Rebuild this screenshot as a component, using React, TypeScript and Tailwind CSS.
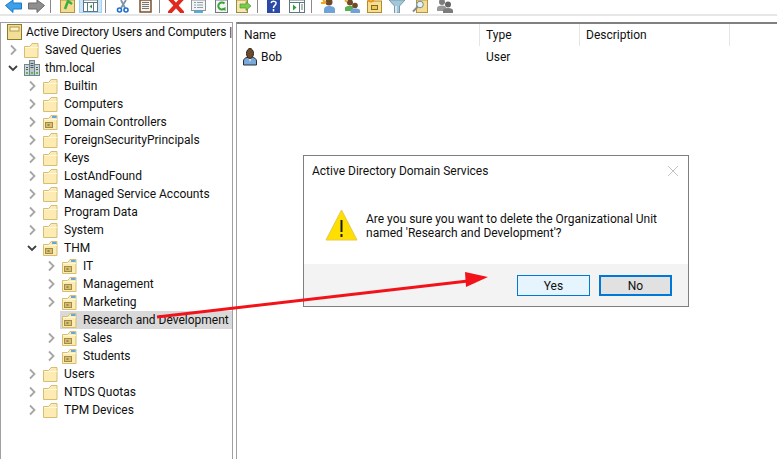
import React from 'react';

type Kind = 'folder' | 'ou' | 'domain';

interface Node {
  label: string;
  depth: number;
  kind: Kind;
  open?: boolean;
  leaf?: boolean;
  selected?: boolean;
}

const tree: Node[] = [
  { label: 'Saved Queries', depth: 0, kind: 'folder' },
  { label: 'thm.local', depth: 0, kind: 'domain', open: true },
  { label: 'Builtin', depth: 1, kind: 'folder' },
  { label: 'Computers', depth: 1, kind: 'folder' },
  { label: 'Domain Controllers', depth: 1, kind: 'ou' },
  { label: 'ForeignSecurityPrincipals', depth: 1, kind: 'folder' },
  { label: 'Keys', depth: 1, kind: 'folder' },
  { label: 'LostAndFound', depth: 1, kind: 'folder' },
  { label: 'Managed Service Accounts', depth: 1, kind: 'folder' },
  { label: 'Program Data', depth: 1, kind: 'folder' },
  { label: 'System', depth: 1, kind: 'folder' },
  { label: 'THM', depth: 1, kind: 'ou', open: true },
  { label: 'IT', depth: 2, kind: 'ou' },
  { label: 'Management', depth: 2, kind: 'ou' },
  { label: 'Marketing', depth: 2, kind: 'ou' },
  { label: 'Research and Development', depth: 2, kind: 'ou', leaf: true, selected: true },
  { label: 'Sales', depth: 2, kind: 'ou' },
  { label: 'Students', depth: 2, kind: 'ou' },
  { label: 'Users', depth: 1, kind: 'folder' },
  { label: 'NTDS Quotas', depth: 1, kind: 'folder' },
  { label: 'TPM Devices', depth: 1, kind: 'folder' },
];

const FolderIcon = ({ ou }: { ou?: boolean }) => (
  <svg width="15" height="15" viewBox="0 0 15 15" className="shrink-0">
    <path d="M0.500 14.500V3.500h5l1.500-1.500 1-1.500h6v14z" fill="#fcecb4" stroke="#d6bd72" />
    <path d="M1 4.500h13" stroke="#fff8dc" />
    {ou && <rect x="2.500" y="7.500" width="7" height="5" fill="#d8bf70" stroke="#a08c48" />}
    {ou && <rect x="4.500" y="9.500" width="2" height="1" fill="#5c5228" />}
    {ou && <rect x="9" y="1" width="4.500" height="2" fill="#62a8dc" />}
  </svg>
);

const DomainIcon = () => (
  <svg width="16" height="16" viewBox="0 0 16 16" className="shrink-0">
    <rect x="5.500" y="0.500" width="5" height="15" fill="#b9c6cc" stroke="#76858c" />
    <rect x="0.500" y="4.500" width="5" height="11" fill="#cdd7db" stroke="#76858c" />
    <rect x="10.500" y="4.500" width="5" height="11" fill="#cdd7db" stroke="#76858c" />
    <rect x="2" y="12" width="2" height="2" fill="#58c04a" />
    <rect x="7" y="12" width="2" height="2" fill="#58c04a" />
    <rect x="12" y="12" width="2" height="2" fill="#58c04a" />
    <path d="M6.500 3.500h3M6.500 5.500h3M6.500 7.500h3M2 7.500h2M12 7.500h2M2 9.500h2M12 9.500h2" stroke="#4d5b61" />
  </svg>
);

const UserIcon = () => (
  <svg width="14" height="18" viewBox="0 0 14 18" className="shrink-0">
    <path d="M0.500 17v-4c0-2 2-3.500 3.500-3.500h5.500c2 0 4 1.500 4 3.500v4z" fill="#7aa8d8" stroke="#26303c" />
    <path d="M5.500 10h3l-1.500 4z" fill="#e6eef6" />
    <ellipse cx="7" cy="5.500" rx="3.500" ry="5" fill="#6b4a2f" stroke="#2e2218" />
  </svg>
);

const Chevron = ({ open }: { open?: boolean }) =>
  open ? (
    <svg width="10" height="10" viewBox="0 0 10 10" className="shrink-0">
      <path d="M1 3l4 4 4-4" fill="none" stroke="#404040" strokeWidth="1.800" />
    </svg>
  ) : (
    <svg width="10" height="12" viewBox="0 0 10 12" className="shrink-0">
      <path d="M3 1.500L7.500 6 3 10.500" fill="none" stroke="#a6a6a6" strokeWidth="1.800" />
    </svg>
  );

const Sep = () => <div className="w-px h-[13px] bg-[#8a8a8a] shrink-0" />;

// toolbar icons, cropped by the top of the window
const Toolbar = () => (
  <div className="h-[13px] bg-white flex items-end overflow-hidden pl-[5px]">
    <svg width="17" height="13" viewBox="0 0 17 13" className="shrink-0">
      <path d="M0.500 5.500L8 0v3h8.500v6H8v3.500z" fill="#3fa0ea" stroke="#1d78c4" />
    </svg>
    <svg width="17" height="13" viewBox="0 0 17 13" className="shrink-0 ml-[6px]">
      <path d="M16.500 5.500L9 0v3H0.500v6H9v3.500z" fill="#8f8f8f" stroke="#6a6a6a" />
    </svg>
    <div className="ml-[5px]"><Sep /></div>
    <svg width="15" height="13" viewBox="0 0 15 13" className="shrink-0 ml-[9px]">
      <rect x="0.500" y="0" width="14" height="12.500" fill="#f3dc92" stroke="#b4953f" />
      <path d="M5 9l3-8 4 3" stroke="#3fae3c" strokeWidth="2.500" fill="none" />
    </svg>
    <div className="ml-[4px] w-[23px] h-[13px] bg-[#cfe6f8] border border-t-0 border-[#99d1ff] flex items-end justify-center shrink-0">
      <svg width="15" height="12" viewBox="0 0 15 12">
        <rect x="0.500" y="0" width="14" height="11.500" fill="#ffffff" stroke="#5d7a80" />
        <path d="M0.500 2.500h14M4.500 2.500v9M10.500 2.500v9" stroke="#5d7a80" />
        <path d="M9 4.500v4l-2.500-2z" fill="#2e9e3a" />
      </svg>
    </div>
    <div className="ml-[3px]"><Sep /></div>
    <svg width="13" height="13" viewBox="0 0 13 13" className="shrink-0 ml-[10px]">
      <path d="M5 0l4 8M10 0L5 8" stroke="#7f93a6" strokeWidth="1.800" />
      <circle cx="3.500" cy="10" r="2" fill="none" stroke="#1f6fd0" strokeWidth="1.600" />
      <circle cx="10" cy="10" r="2" fill="none" stroke="#1f6fd0" strokeWidth="1.600" />
    </svg>
    <svg width="13" height="13" viewBox="0 0 13 13" className="shrink-0 ml-[10px]">
      <rect x="1" y="0" width="11" height="12" fill="#f6f4ec" stroke="#7b5230" strokeWidth="1.500" />
      <path d="M3 2.500h7M3 4.500h7M3 6.500h7M3 8.500h7" stroke="#777777" />
    </svg>
    <div className="ml-[7px]"><Sep /></div>
    <svg width="16" height="13" viewBox="0 0 16 13" className="shrink-0 ml-[8px]">
      <path d="M2 -1l12 13M14 -1L2 12" stroke="#e0281f" strokeWidth="4" strokeLinecap="round" />
    </svg>
    <svg width="15" height="13" viewBox="0 0 15 13" className="shrink-0 ml-[7px]">
      <rect x="0.500" y="0" width="14" height="10.500" fill="#f4f4f4" stroke="#8b9498" />
      <path d="M3 2.500h2M6 2.500h6M3 5h2M6 5h6M3 7.500h2M6 7.500h6" stroke="#8ba0aa" />
      <rect x="3" y="11" width="9" height="2" fill="#45b0ea" />
    </svg>
    <svg width="13" height="13" viewBox="0 0 13 13" className="shrink-0 ml-[9px]">
      <rect x="0.500" y="0" width="12" height="12.500" fill="#f4f4f4" stroke="#6f787c" />
      <path d="M9.500 8.500a3.600 3.600 0 1 1 0-5" stroke="#37a637" strokeWidth="2" fill="none" />
      <path d="M7 9l3.500-2v4z" fill="#37a637" />
    </svg>
    <svg width="16" height="13" viewBox="0 0 16 13" className="shrink-0 ml-[8px]">
      <rect x="0.500" y="0" width="11" height="12.500" fill="#f6e7b0" stroke="#a08a3f" />
      <path d="M4 4h6V1.500L15 6l-5 4.500V8H4z" fill="#7ccb4a" stroke="#3f8f2c" strokeWidth="0.600" />
    </svg>
    <div className="ml-[5px]"><Sep /></div>
    <svg width="13" height="13" viewBox="0 0 13 13" className="shrink-0 ml-[9px]">
      <rect width="13" height="13" fill="#2b4aa8" />
      <path d="M4 3c1-2.500 5.500-2 5 .5C8.700 5.500 6.500 5.500 6.500 8M6.500 9v2.500" stroke="#ffffff" strokeWidth="1.500" fill="none" />
    </svg>
    <svg width="16" height="13" viewBox="0 0 16 13" className="shrink-0 ml-[9px]">
      <rect x="0.500" y="0" width="15" height="12.500" fill="#ffffff" stroke="#5d7a80" />
      <path d="M0.500 2.500h15M10.500 2.500v10" stroke="#5d7a80" />
      <path d="M4 4.500v6l3.500-3z" fill="#2e9e3a" />
      <path d="M12 5h2M12 7h2M12 9h2" stroke="#5d7a80" />
    </svg>
    <div className="ml-[6px]"><Sep /></div>
    <svg width="15" height="13" viewBox="0 0 15 13" className="shrink-0 ml-[9px]">
      <circle cx="8" cy="2" r="3.500" fill="#6f4a2a" />
      <path d="M3 13V9.500C3 7 5 6 8 6s6 1 6 3.500V13z" fill="#6fa2d6" />
      <path d="M2 0l3 3M0 3h4" stroke="#f2a51a" strokeWidth="1.800" />
    </svg>
    <svg width="16" height="13" viewBox="0 0 16 13" className="shrink-0 ml-[8px]">
      <circle cx="6" cy="2.500" r="3" fill="#6f4a2a" />
      <path d="M1 11V8c0-1.500 2-2 5-2s3 .5 3 2v3z" fill="#5db04e" />
      <circle cx="11" cy="5.500" r="2.800" fill="#6f4a2a" />
      <path d="M6.500 13v-2.500C6.500 9 8.500 8.500 11 8.500s5 .5 5 2V13z" fill="#6fa2d6" />
      <path d="M1 0l2 2" stroke="#f2a51a" strokeWidth="1.800" />
    </svg>
    <svg width="15" height="13" viewBox="0 0 15 13" className="shrink-0 ml-[7px]">
      <rect x="0.500" y="1" width="14" height="11.500" fill="#f8df90" stroke="#b58a2a" />
      <rect x="4.500" y="5.500" width="6" height="4" fill="#f2c84c" stroke="#7d6a2c" />
      <path d="M1 0l3 2M7 0L4 2" stroke="#f2921a" strokeWidth="1.800" />
    </svg>
    <svg width="16" height="13" viewBox="0 0 16 13" className="shrink-0 ml-[7px]">
      <path d="M0 0h16l-5.500 6v7h-5V6z" fill="#a3c6da" stroke="#7a99ab" />
      <path d="M7 6v7" stroke="#e6f0f6" strokeWidth="1.500" />
    </svg>
    <svg width="16" height="13" viewBox="0 0 16 13" className="shrink-0 ml-[7px]">
      <rect x="4.500" y="0" width="11" height="12.500" fill="#f4dd93" stroke="#b4953f" />
      <circle cx="8" cy="4.500" r="3.300" fill="#e8f2f8" stroke="#6d8ba0" />
      <path d="M5.500 7L1 11.500" stroke="#8a8a8a" strokeWidth="2" />
    </svg>
    <svg width="16" height="13" viewBox="0 0 16 13" className="shrink-0 ml-[9px]">
      <circle cx="5" cy="2" r="3" fill="#7e7e7e" />
      <circle cx="11" cy="4.500" r="3" fill="#666666" />
      <path d="M0 11V8c0-1.500 2-2.500 5-2.500S9 6.500 9 8v3z" fill="#999999" />
      <path d="M6 13v-2.500C6 9 8 8 11 8s5 1 5 2.500V13z" fill="#7c7c7c" />
    </svg>
  </div>
);

const TreeRow = ({ node }: { node: Node }) => (
  <div className="h-[18px] flex items-center">
    <div className={node.depth === 0 ? 'w-[7px] shrink-0' : node.depth === 1 ? 'w-[26px] shrink-0' : 'w-[45px] shrink-0'} />
    <div className={`w-[16px] shrink-0 flex items-center ${node.selected ? '-mr-[2px]' : ''}`}>
      {!node.leaf && <Chevron open={node.open} />}
    </div>
    <div className={`flex flex-1 items-center h-[18px] ${node.selected ? 'bg-[#d9d9d9] pl-[2px]' : ''}`}>
      {node.kind === 'domain' ? <DomainIcon /> : <FolderIcon ou={node.kind === 'ou'} />}
      <span className={`whitespace-nowrap ${node.kind === 'domain' ? 'ml-[5px]' : 'ml-[6px]'}`}>{node.label}</span>
    </div>
  </div>
);

export default function App() {
  return (
    <div
      className="relative w-[777px] h-[459px] overflow-hidden bg-white text-[12px] leading-[18px] text-[#101010]"
      style={{ fontFamily: 'Roboto, sans-serif' }}
    >
      <Toolbar />
      <div className="h-[8px] mt-[1px] bg-white border-t-2 border-[#e6e6e6]" />

      <div className="flex h-[438px]">
        {/* tree pane */}
        <div className="w-[233px] shrink-0 border-t border-r border-l border-[#a0a0a0]">
          <div className="h-[18px] flex items-center pl-[6px]">
            <svg width="15" height="16" viewBox="0 0 15 16" className="shrink-0">
              <rect x="0.500" y="0.500" width="14" height="15" fill="#f2de94" stroke="#8f7a34" />
              <rect x="3" y="3" width="9" height="4" fill="#fbf3cf" stroke="#b09a4a" />
            </svg>
            <span className="ml-[4px] whitespace-nowrap tracking-[-0.06px]">Active Directory Users and Computers |</span>
          </div>
          {tree.map(node => (
            <TreeRow key={node.label} node={node} />
          ))}
        </div>

        {/* list pane */}
        <div className="w-[3px] shrink-0 bg-white" />
        <div className="flex-1 border-t-2 border-l border-t-[#808080] border-l-[#a0a0a0]">
          <div className="flex h-[22px] items-center">
            <div className="w-[243px] pl-[7px] h-full flex items-center border-r border-[#e5e5e5]">Name</div>
            <div className="w-[100px] pl-[6px] h-full flex items-center border-r border-[#e5e5e5]">Type</div>
            <div className="w-[150px] pl-[6px] h-full flex items-center border-r border-[#e5e5e5]">Description</div>
          </div>
          <div className="flex h-[21px] items-center">
            <div className="w-[243px] pl-[6px] flex items-center">
              <UserIcon />
              <span className="ml-[4px]">Bob</span>
            </div>
            <div className="pl-[6px]">User</div>
          </div>
        </div>
      </div>

      {/* confirm dialog */}
      <div className="absolute left-[303px] top-[155px] w-[386px] h-[152px] bg-white border border-[#7f7f7f] flex flex-col">
        <div className="flex items-center justify-between h-[30px] pl-[8px] pr-[9px]">
          <span>Active Directory Domain Services</span>
          <svg width="12" height="12" viewBox="0 0 12 12">
            <path d="M1 1l10 10M11 1L1 11" stroke="#c4c4c4" />
          </svg>
        </div>
        <div className="flex-1 flex items-start pl-[21px] pt-[23px]">
          <svg width="33" height="32" viewBox="0 0 33 32" className="shrink-0">
            <path d="M16.500 1L32 31H1z" fill="#ffdf00" stroke="#e8c84a" />
            <path d="M16.500 11v12M16.500 25v3" stroke="#1a1a1a" strokeWidth="2" />
          </svg>
          <p className="ml-[8px] mt-[3px] leading-[14px]">
            Are you sure you want to delete the Organizational Unit
            <br />
            named 'Research and Development'?
          </p>
        </div>
        <div className="h-[42px] bg-[#f3f3f3] flex items-start justify-end gap-[9px] pt-[11px] pr-[16px]">
          <div className="w-[73px] h-[21px] bg-[#e5f4fd] border border-[#0078d7] flex items-center justify-center">Yes</div>
          <div className="w-[73px] h-[21px] bg-[#e1e1e1] border-2 border-[#0078d7] flex items-center justify-center">No</div>
        </div>
      </div>

      {/* annotation arrow */}
      <svg width="777" height="459" viewBox="0 0 777 459" className="absolute left-0 top-0 pointer-events-none">
        <path d="M157 317L468 281" stroke="#f2131a" strokeWidth="3" />
        <path d="M465 272L488 277L466 287z" fill="#f2131a" />
      </svg>
    </div>
  );
}
